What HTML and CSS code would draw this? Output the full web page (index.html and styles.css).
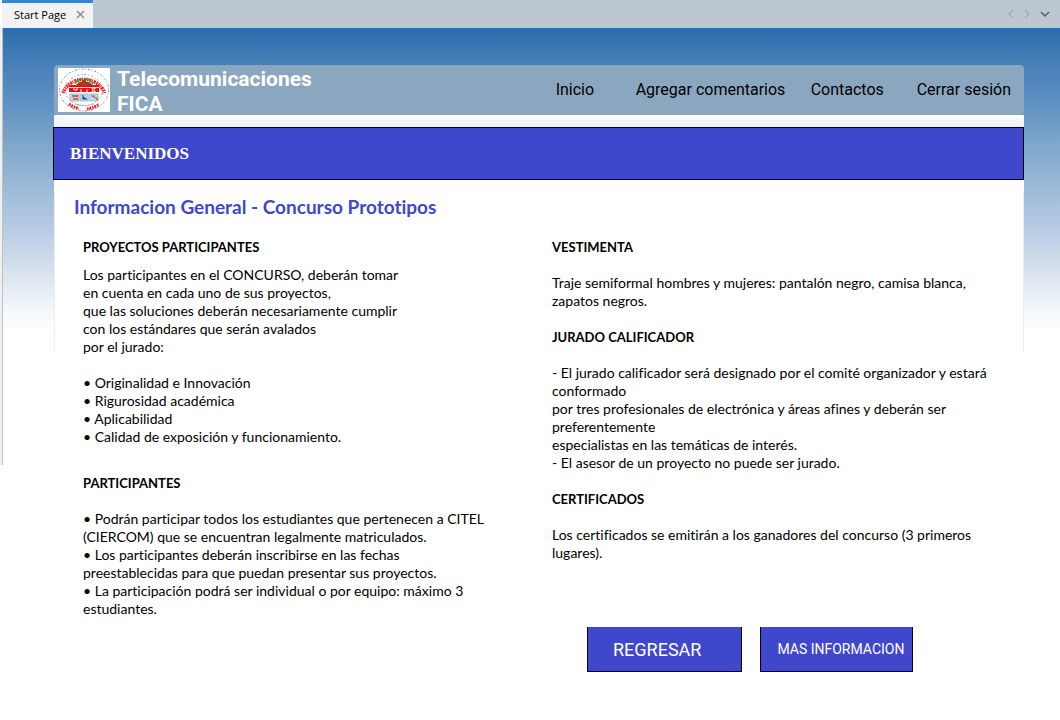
FILE: index.html
```html
<!DOCTYPE html>
<html lang="es">
<head>
<meta charset="utf-8">
<meta name="viewport" content="width=device-width, initial-scale=1">
<title>Telecomunicaciones FICA</title>
<link rel="stylesheet" href="styles.css">
</head>
<body>
<div class="tabstrip">
  <div class="tab">
    <span>Start Page</span>
    <button class="icon-button" type="button" aria-label="Cerrar pestaña">
      <svg width="9" height="9" viewBox="0 0 9 9"><path d="M1 1l7 7M8 1L1 8" fill="none" stroke="#858585" stroke-width="1.3"/></svg>
    </button>
  </div>
  <div class="tabstrip-tools">
    <button class="icon-button" type="button" aria-label="Pestaña anterior">
      <svg width="6" height="10" viewBox="0 0 6 10"><path d="M5 1L1 5l4 4" fill="none" stroke="#a3a9b0" stroke-width="1.2"/></svg>
    </button>
    <button class="icon-button" type="button" aria-label="Pestaña siguiente">
      <svg width="6" height="10" viewBox="0 0 6 10"><path d="M1 1l4 4-4 4" fill="none" stroke="#a3a9b0" stroke-width="1.2"/></svg>
    </button>
    <button class="icon-button" type="button" aria-label="Lista de pestañas">
      <svg width="10" height="6" viewBox="0 0 10 6"><path d="M1 1l4 4 4-4" fill="none" stroke="#555b61" stroke-width="1.4"/></svg>
    </button>
  </div>
</div>

<div class="page">
  <header class="header">
    <svg class="logo" width="52" height="44" viewBox="0 0 52 44" role="img" aria-label="Universidad Técnica del Norte">
      <rect width="52" height="44" fill="#fff"/>
      <ellipse cx="26" cy="22" rx="24.5" ry="21" fill="none" stroke="#777" stroke-width=".9" stroke-dasharray="2 1.5 1 2"/>
      <ellipse cx="26" cy="22" rx="18.5" ry="15.5" fill="none" stroke="#888" stroke-width=".8" stroke-dasharray="1 2 2 2"/>
      <path d="M5 25A21.500 18.500 0 0 1 46.500 25" fill="none" stroke="#ee2222" stroke-width="3.600" stroke-dasharray="1.500 .8 2 .7 1 .9 2.200 .8"/>
      <path d="M6 22A20.500 17.500 0 0 1 45.500 22" fill="none" stroke="#fff" stroke-width=".7" stroke-dasharray="1 2.300 1.500 1.700"/>
      <path d="M11 36Q17 40 21 40.500M29 41Q36 40 41 36" fill="none" stroke="#ee2222" stroke-width="3" stroke-dasharray="1.500 .8 2 1"/>
      <path d="M17 36Q26 39 36 36" fill="none" stroke="#999" stroke-dasharray="1.500 1"/>
      <path d="M17 16q3-5 8-5M35 16q-3-5-8-5" fill="none" stroke="#2f9b4c" stroke-width="1.3"/>
      <path d="M18 17l3-3h2l3-3 3 3h2l4 3z" fill="#a23c24"/>
      <path d="M11 17h30v2H11zM11 20h30v4H11z" fill="#f50d0d"/>
      <path d="M16 20v2h3v-2M23 21v3M29 21v3M34 20v1h3v-1M34 24v-1h3v1" fill="none" stroke="#fff"/>
      <path d="M12 26h9v7h-9zM22 26h8v7h-8zM31 26h9v7h-9z" fill="#b9dced" stroke="#8ba4b0" stroke-width=".6"/>
      <path d="M14 28h6M15 31h5" stroke="#e33" stroke-width="1.4"/>
      <path d="M25 27v4h4M25 29l3 2" fill="none" stroke="#174f93" stroke-width="1.2"/>
      <path d="M33 28h3v2M37 30h2v2" fill="none" stroke="#9b5c4b" stroke-width="1.2"/>
    </svg>
    <div class="brand">Telecomunicaciones<br>FICA</div>
    <nav class="nav">
      <a href="#inicio">Inicio</a>
      <a href="#comentarios">Agregar comentarios</a>
      <a href="#contactos">Contactos</a>
      <a href="#salir">Cerrar sesión</a>
    </nav>
  </header>

  <main class="panel">
    <h1 class="banner">BIENVENIDOS</h1>
    <h2 class="title">Informacion General - Concurso Prototipos</h2>
    <div class="columns">
      <div class="column">
        <section class="block block-lead">
          <h3>PROYECTOS PARTICIPANTES</h3>
          <p>Los participantes en el CONCURSO, deberán tomar<br>en cuenta en cada uno de sus proyectos,<br>que las soluciones deberán necesariamente cumplir<br>con los estándares que serán avalados<br>por el jurado:</p>
          <p>• Originalidad e Innovación<br>• Rigurosidad académica<br>• Aplicabilidad<br>• Calidad de exposición y funcionamiento.</p>
        </section>
        <section class="block">
          <h3>PARTICIPANTES</h3>
          <p>• Podrán participar todos los estudiantes que pertenecen a CITEL<br>(CIERCOM) que se encuentran legalmente matriculados.<br>• Los participantes deberán inscribirse en las fechas<br>preestablecidas para que puedan presentar sus proyectos.<br>• La participación podrá ser individual o por equipo: máximo 3<br>estudiantes.</p>
        </section>
      </div>
      <div class="column">
        <section class="block">
          <h3>VESTIMENTA</h3>
          <p>Traje semiformal hombres y mujeres: pantalón negro, camisa blanca,<br>zapatos negros.</p>
          <h3>JURADO CALIFICADOR</h3>
          <p>- El jurado calificador será designado por el comité organizador y estará<br>conformado<br>por tres profesionales de electrónica y áreas afines y deberán ser<br>preferentemente<br>especialistas en las temáticas de interés.<br>- El asesor de un proyecto no puede ser jurado.</p>
          <h3>CERTIFICADOS</h3>
          <p>Los certificados se emitirán a los ganadores del concurso (3 primeros<br>lugares).</p>
        </section>
        <div class="actions">
          <button class="button button-large" type="button">REGRESAR</button>
          <button class="button" type="button">MAS INFORMACION</button>
        </div>
      </div>
    </div>
  </main>
</div>
</body>
</html>
```
FILE: styles.css
```css
* {
  box-sizing: border-box;
}

body {
  margin: 0;
  background: #fff;
  color: #000;
  font-family: Lato, "Liberation Sans", sans-serif;
  font-size: 14px;
  font-variant-ligatures: none;
  line-height: 18px;
}

h1, h2, h3, p {
  margin: 0;
}

button {
  font-family: inherit;
  cursor: pointer;
}

/* Tab strip */
.tabstrip {
  display: flex;
  justify-content: space-between;
  height: 28px;
  margin-left: 2px;
  background: #bdc7d1;
}

.tab {
  display: flex;
  align-items: center;
  gap: 10px;
  padding: 0 8px 2px 12px;
  border-top: 3px solid #3c84c8;
  background: #f2f2f2;
  font-family: "Open Sans", "Noto Sans", sans-serif;
  font-size: 11px;
}

.tabstrip-tools {
  display: flex;
  align-items: center;
  gap: 10px;
  padding-right: 10px;
}

.icon-button {
  display: flex;
  padding: 0;
  border: 0;
  background: none;
}

/* Page backdrop: side rule over a blue fade */
.page {
  padding: 37px 36px 48px 53px;
  background:
    linear-gradient(#f0f0f0, #f0f0f0) 0 0 / 2px 437px no-repeat,
    linear-gradient(#c0c0c0, #c0c0c0) 2px 0 / 1px 437px no-repeat,
    linear-gradient(#2c6cad 0, #467fb8 35px, #5d8fc2 72px, #7ea7cb 116px, #a2bfdb 170px, #b9cde4 205px, #dce6f0 250px, #f4f7fb 282px, #fff 305px) 0 0 / 100% 305px no-repeat;
}

/* Header */
.header {
  display: flex;
  align-items: center;
  height: 50px;
  margin-left: 1px;
  padding: 0 13px 0 4px;
  border-radius: 4px;
  background: #8ba7c0;
}

.brand {
  margin-left: 7px;
  padding-top: 4px;
  color: #fff;
  font-family: Roboto, sans-serif;
  font-size: 21px;
  font-weight: bold;
  line-height: 25px;
}

.nav {
  display: grid;
  grid-template-columns: 80px 175px 106px auto;
  margin-left: auto;
  font-family: Roboto, sans-serif;
  font-size: 16px;
}

.nav a {
  color: #000;
  text-decoration: none;
  white-space: nowrap;
}

/* Content panel */
.panel {
  padding-top: 12px;
  background:
    linear-gradient(#fafdfa, #ebf0f3) 1px 0 / 100% 12px no-repeat,
    linear-gradient(#eee, #eee) 1px 76px / 1px 161px no-repeat,
    linear-gradient(#eee, #eee) 100% 76px / 1px 161px no-repeat,
    linear-gradient(#fff, #fff) 1px 0 / 100% 100% no-repeat;
}

.banner {
  padding: 16px;
  border: 1px solid #000;
  background: #3f47cc;
  color: #fff;
  font-family: "Liberation Serif", serif;
  font-size: 17px;
  line-height: 19px;
}

.title {
  padding: 15px 21px;
  color: #3f47cc;
  font-size: 19px;
  line-height: 24px;
}

.columns {
  display: grid;
  grid-template-columns: 1fr 1fr;
  padding: 4px 3px 0 30px;
}

.column {
  display: flex;
  flex-direction: column;
  gap: 28px;
}

.block {
  display: flex;
  flex-direction: column;
  gap: 18px;
}

.block-lead h3 {
  margin-bottom: -8px;
}

.block h3 {
  font-size: 13px;
  line-height: 18px;
}

.actions {
  display: flex;
  gap: 18px;
  margin-top: 37px;
  padding-left: 35px;
}

.button {
  height: 45px;
  padding: 0 8px 0 16px;
  border: 1px solid #000;
  border-top: 0;
  background: #3f47cc;
  color: #fff;
  font-family: Roboto, sans-serif;
  font-size: 14px;
  white-space: nowrap;
}

.button-large {
  padding: 0 40px 0 25px;
  font-size: 18px;
}
```
